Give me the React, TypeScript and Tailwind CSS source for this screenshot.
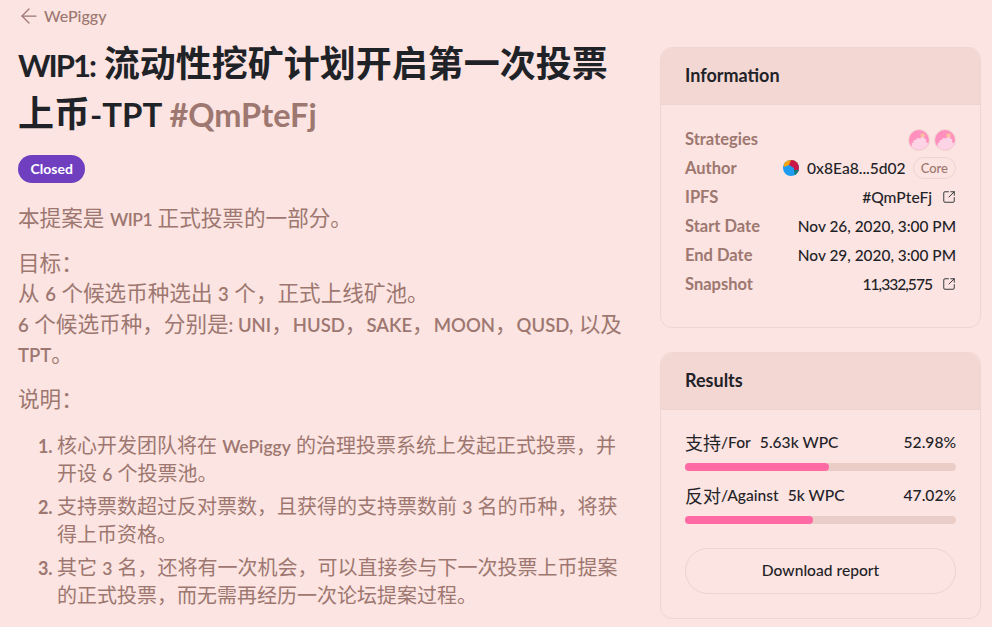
import React from 'react'
import { ArrowLeft, SquareArrowOutUpRight } from 'lucide-react'

function PigAvatar() {
    return (
        <svg className='w-[22px] h-[22px] rounded-full border border-[#eed3ce]' viewBox='0 0 22 22'>
            <rect width='22' height='22' fill='#ff8fbd' />
            <circle cx='15' cy='6' r='2.5' fill='#fbc0a0' />
            <path d='M3 22 V14 H5 V11 H8 V9 H13 V8 H17 V10 H19 V14 H22 V22 Z' fill='#fdd3e6' />
        </svg>
    )
}

function Blockie() {
    return (
        <svg className='w-4 h-4 rounded-full' viewBox='0 0 16 16'>
            <rect width='16' height='16' fill='#1d9bf0' />
            <path d='M0 0 H16 V4 L6 5 L1 7 Z' fill='#f5a30a' />
            <path d='M6 5 L8 0 H16 V13 L11 10 L11 8 Z' fill='#c9184a' />
            <path d='M11 10 L16 10 V16 H12 Z' fill='#0e7c7b' />
        </svg>
    )
}

// latin runs sit smaller and heavier than the chinese around them
function L({ children }: { children: React.ReactNode }) {
    return <span className='text-[18.5px] leading-none font-semibold'>{children}</span>
}

function S({ children }: { children: React.ReactNode }) {
    return <span className='text-[17.5px] leading-none font-semibold'>{children}</span>
}

function InfoRow({ label, children }: { label: string; children: React.ReactNode }) {
    return (
        <div className='flex justify-between items-center h-[29px]'>
            <span className='text-[#9d7770] text-[16.5px] font-bold'>{label}</span>
            <div className='flex items-center text-[#1f2328]'>{children}</div>
        </div>
    )
}

function Vote({ cn, en, value, pct, width }: { cn: string; en: string; value: string; pct: string; width: string }) {
    return (
        <div>
            <div className='flex justify-between items-center h-[26px] text-[#1f2328]'>
                <div className='flex items-center'>
                    <span className='text-[18px] font-normal'>{cn}</span>
                    <span>/{en}</span>
                    <span className='ml-[9px]'>{value}</span>
                </div>
                <span>{pct}</span>
            </div>
            <div className='mt-[7px] h-2 rounded-full bg-[#ebcdc8]'>
                <div className={`h-2 rounded-full bg-[#ff69a4] ${width}`}></div>
            </div>
        </div>
    )
}

function App() {
    return (
        <div className='h-screen overflow-hidden bg-[#fbe4e1] flex justify-between pl-[18px] pr-[11px] font-["Lato","Noto_Sans_CJK_SC",sans-serif]'>
            <div className='w-[612px]'>
                <div className='flex items-center gap-[3px] pt-[6px] h-[26px] text-base font-medium text-[#9d7770]'>
                    <ArrowLeft className='ml-[-1px] w-6 h-6' strokeWidth={1.25} />
                    <span>WePiggy</span>
                </div>

                <h1 className='mt-[12px] text-[36px] leading-[50px] font-bold text-[#1f2328]'>
                    <span className='text-[31px] leading-none tracking-[-2px]'>WIP1:</span> 流动性挖矿计划开启第一次投票上币<span className='text-[33px] leading-none'>-TPT <span className='text-[32.5px] text-[#9d7770]'>#QmPteFj</span></span>
                </h1>

                <div className='mt-[17px] inline-flex items-center h-7 px-[12.5px] rounded-full bg-[#6f3fc0] text-white text-sm font-bold'>
                    Closed
                </div>

                <div className='text-[#9d7770] text-[21.6px] leading-[30.2px]'>
                    <p className='mt-[20px]'>本提案是 <span className='text-[17.5px] leading-none font-semibold tracking-[-0.5px]'>WIP1</span> 正式投票的一部分。</p>
                    <p className='mt-[15px]'>
                        目标：<br />
                        从 <L>6</L> 个候选币种选出 <L>3</L> 个，正式上线矿池。<br />
                        <L>6</L> 个候选币种，分别是<L>: UNI</L>，<L>HUSD</L>，<L>SAKE</L>，<L>MOON</L>，<L>QUSD,</L> 以及 <L>TPT</L>。
                    </p>
                    <p className='mt-[15px]'>说明：</p>
                    <ol className='mt-[17px] list-decimal pl-[39px] text-[20px] leading-[28px] marker:font-bold marker:text-[18px] flex flex-col gap-[5px]'>
                        <li>核心开发团队将在 <S>WePiggy</S> 的治理投票系统上发起正式投票，并开设 <S>6</S> 个投票池。</li>
                        <li>支持票数超过反对票数，且获得的支持票数前 <S>3</S> 名的币种，将获得上币资格。</li>
                        <li>其它 <S>3</S> 名，还将有一次机会，可以直接参与下一次投票上币提案的正式投票，而无需再经历一次论坛提案过程。</li>
                    </ol>
                </div>
            </div>

            <div className='w-[321px] pt-[47px] text-[15.6px] font-medium'>
                <div className='rounded-xl border border-[#f0d6d1] h-[281px]'>
                    <div className='flex items-center h-[57px] px-6 pb-[2px] bg-[#f3d7d3] border-b border-[#eed3ce] rounded-t-xl text-[#1f2328] text-[18px] font-bold'>
                        Information
                    </div>
                    <div className='px-6 pt-[20px]'>
                        <InfoRow label='Strategies'>
                            <PigAvatar />
                            <span className='ml-[4px]'><PigAvatar /></span>
                        </InfoRow>
                        <InfoRow label='Author'>
                            <Blockie />
                            <span className='ml-2'>0x8Ea8...5d02</span>
                            <span className='ml-[7px] px-[7px] h-[22px] flex items-center rounded-full border border-[#eed3ce] text-[13px] text-[#9d7770]'>Core</span>
                        </InfoRow>
                        <InfoRow label='IPFS'>
                            <span>#QmPteFj</span>
                            <SquareArrowOutUpRight className='ml-[10px] w-[14px] h-[14px]' strokeWidth={1.5} />
                        </InfoRow>
                        <InfoRow label='Start Date'><span className='text-[15.4px]'>Nov 26, 2020, 3:00 PM</span></InfoRow>
                        <InfoRow label='End Date'><span className='text-[15.4px]'>Nov 29, 2020, 3:00 PM</span></InfoRow>
                        <InfoRow label='Snapshot'>
                            <span className='tracking-[-1px]'>11,332,575</span>
                            <SquareArrowOutUpRight className='ml-[10px] w-[14px] h-[14px]' strokeWidth={1.5} />
                        </InfoRow>
                    </div>
                </div>

                <div className='mt-6 rounded-xl border border-[#f0d6d1] h-[267px]'>
                    <div className='flex items-center h-[57px] px-6 pb-[2px] bg-[#f3d7d3] border-b border-[#eed3ce] rounded-t-xl text-[#1f2328] text-[18px] font-bold'>
                        Results
                    </div>
                    <div className='px-6 pt-[20px]'>
                        <Vote cn='支持' en='For' value='5.63k WPC' pct='52.98%' width='w-[144px]' />
                        <div className='mt-[12px]'>
                            <Vote cn='反对' en='Against' value='5k WPC' pct='47.02%' width='w-[128px]' />
                        </div>
                        <button className='mt-[24px] w-full h-[46px] rounded-full border border-[#eed3ce] text-[#1f2328]'>
                            Download report
                        </button>
                    </div>
                </div>
            </div>
        </div>
    )
}

export default App
